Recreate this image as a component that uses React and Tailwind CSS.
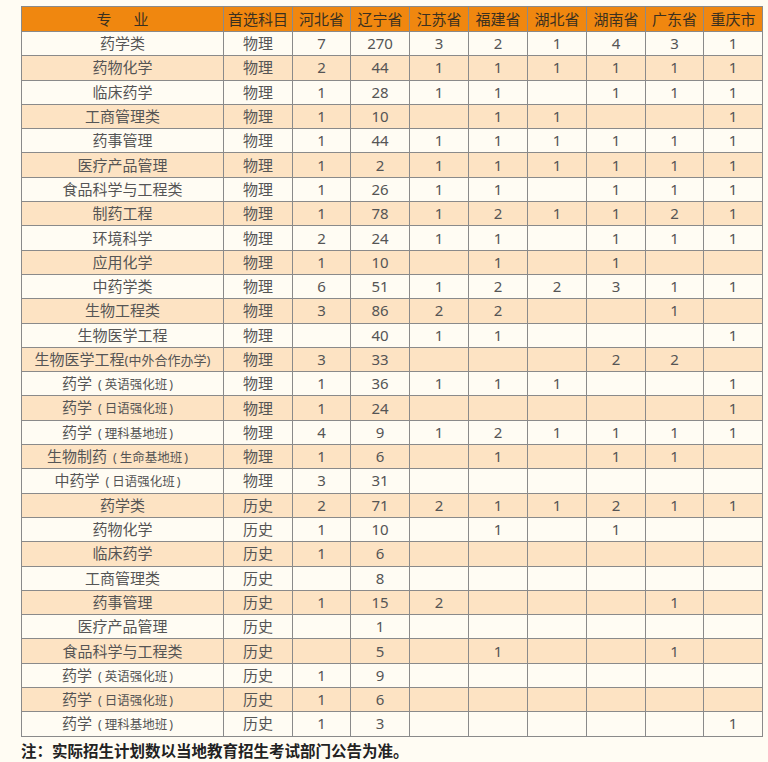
import React from "react";

const rows = [
  ["药学类", "", "物理", "7", "270", "3", "2", "1", "4", "3", "1"],
  ["药物化学", "", "物理", "2", "44", "1", "1", "1", "1", "1", "1"],
  ["临床药学", "", "物理", "1", "28", "1", "1", "", "1", "1", "1"],
  ["工商管理类", "", "物理", "1", "10", "", "1", "1", "", "", "1"],
  ["药事管理", "", "物理", "1", "44", "1", "1", "1", "1", "1", "1"],
  ["医疗产品管理", "", "物理", "1", "2", "1", "1", "1", "1", "1", "1"],
  ["食品科学与工程类", "", "物理", "1", "26", "1", "1", "", "1", "1", "1"],
  ["制药工程", "", "物理", "1", "78", "1", "2", "1", "1", "2", "1"],
  ["环境科学", "", "物理", "2", "24", "1", "1", "", "1", "1", "1"],
  ["应用化学", "", "物理", "1", "10", "", "1", "", "1", "", ""],
  ["中药学类", "", "物理", "6", "51", "1", "2", "2", "3", "1", "1"],
  ["生物工程类", "", "物理", "3", "86", "2", "2", "", "", "1", ""],
  ["生物医学工程", "", "物理", "", "40", "1", "1", "", "", "", "1"],
  ["生物医学工程", "#中外合作办学", "物理", "3", "33", "", "", "", "2", "2", ""],
  ["药学", "英语强化班", "物理", "1", "36", "1", "1", "1", "", "", "1"],
  ["药学", "日语强化班", "物理", "1", "24", "", "", "", "", "", "1"],
  ["药学", "理科基地班", "物理", "4", "9", "1", "2", "1", "1", "1", "1"],
  ["生物制药", "生命基地班", "物理", "1", "6", "", "1", "", "1", "1", ""],
  ["中药学", "日语强化班", "物理", "3", "31", "", "", "", "", "", ""],
  ["药学类", "", "历史", "2", "71", "2", "1", "1", "2", "1", "1"],
  ["药物化学", "", "历史", "1", "10", "", "1", "", "1", "", ""],
  ["临床药学", "", "历史", "1", "6", "", "", "", "", "", ""],
  ["工商管理类", "", "历史", "", "8", "", "", "", "", "", ""],
  ["药事管理", "", "历史", "1", "15", "2", "", "", "", "1", ""],
  ["医疗产品管理", "", "历史", "", "1", "", "", "", "", "", ""],
  ["食品科学与工程类", "", "历史", "", "5", "", "1", "", "", "1", ""],
  ["药学", "英语强化班", "历史", "1", "9", "", "", "", "", "", ""],
  ["药学", "日语强化班", "历史", "1", "6", "", "", "", "", "", ""],
  ["药学", "理科基地班", "历史", "1", "3", "", "", "", "", "", "1"],
];

const headers = ["首选科目", "河北省", "辽宁省", "江苏省", "福建省", "湖北省", "湖南省", "广东省", "重庆市"];
const widths = ["w-[202px]", "w-[69px]", "w-[58px]", "w-[59px]", "w-[59px]", "w-[59px]", "w-[59px]", "w-[59px]", "w-[58px]", "w-[59px]"];

function Sub({ text }) {
  if (!text) return null;
  if (text.startsWith("#")) {
    return <span className="text-[13px]">({text.slice(1)})</span>;
  }
  return (
    <span className="text-[12.5px] mr-[10px]">
      <span className="ml-[6px] mr-[3px]">(</span>
      {text}
      <span className="ml-[2px]">)</span>
    </span>
  );
}

export default function App() {
  return (
    <div
      className="w-[768px] h-[762px] bg-[#fffcf3] overflow-hidden pt-[6px] pl-[21px]"
      style={{ fontFamily: '"Noto Sans", "Noto Sans CJK SC", sans-serif' }}
    >
      <table className="border-collapse table-fixed w-[741px] text-[15px] leading-none">
        <colgroup>
          {widths.map((w, i) => (
            <col key={i} className={w} />
          ))}
        </colgroup>
        <thead>
          <tr className="h-[25px] bg-[#f0870f] text-[#3a3020]">
            <th className="border border-[#8a8a8a] font-normal text-center">
              专<span className="inline-block w-[22px]"></span>业
            </th>
            {headers.map((h) => (
              <th key={h} className="border border-[#8a8a8a] font-normal text-center px-0">
                {h}
              </th>
            ))}
          </tr>
        </thead>
        <tbody>
          {rows.map((r, i) => (
            <tr key={i} className={`h-[24.3px] ${i % 2 === 1 ? "bg-[#fde3c3]" : "bg-[#fffcf3]"} text-[#555555]`}>
              <td className="border border-[#8a8a8a] text-center whitespace-nowrap">
                {r[0]}
                <Sub text={r[1]} />
              </td>
              {r.slice(2).map((c, j) => (
                <td key={j} className="border border-[#8a8a8a] text-center">
                  {c}
                </td>
              ))}
            </tr>
          ))}
        </tbody>
      </table>
      <div className="mt-[7px] text-[15.5px] font-semibold text-[#222222] leading-none">
        注：实际招生计划数以当地教育招生考试部门公告为准。
      </div>
    </div>
  );
}
